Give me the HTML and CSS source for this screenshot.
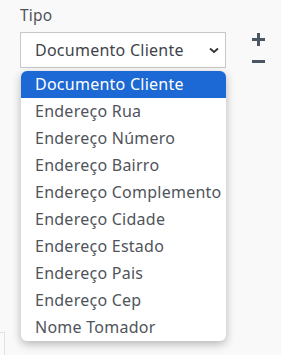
FILE: index.html
```html
<!DOCTYPE html>
<html lang="pt">
<head>
    <meta charset="UTF-8">
    <title>Tipo</title>
    <link rel="stylesheet" href="styles.css">
</head>
<body>
    <div class="field">
        <div class="field-main">
            <label class="label">Tipo</label>
            <div class="select">
                <span>Documento Cliente</span>
                <svg class="chevron" width="10" height="7" viewBox="0 0 10 7"><path d="M1 1.5 L5 5 L9 1.5" fill="none" stroke="#333" stroke-width="1.8"/></svg>
            </div>
            <ul class="options">
                <li class="active">Documento Cliente</li>
                <li>Endereço Rua</li>
                <li>Endereço Número</li>
                <li>Endereço Bairro</li>
                <li>Endereço Complemento</li>
                <li>Endereço Cidade</li>
                <li>Endereço Estado</li>
                <li>Endereço Pais</li>
                <li>Endereço Cep</li>
                <li>Nome Tomador</li>
            </ul>
        </div>
        <div class="actions">
            <span class="plus"></span>
            <span class="minus"></span>
        </div>
    </div>
    <div class="behind"></div>
</body>
</html>
```

FILE: styles.css
```css
html {
    overflow: hidden;
}

body {
    margin: 0;
    width: 281px;
    height: 355px;
    overflow: hidden;
    background-color: #f9f9f9;
    font-family: "Noto Sans", sans-serif;
    color: #4f545a;
    position: relative;
}

.field {
    display: flex;
    padding: 5px 0 0 20px;
}

.field-main {
    width: 206px;
}

.label {
    display: block;
    font-size: 15.5px;
    line-height: 20px;
    height: 27px;
    letter-spacing: 0.2px;
}

.select {
    height: 34px;
    border: 1px solid #c8c8c8;
    background: #fff;
    display: flex;
    align-items: center;
    justify-content: space-between;
    padding: 0 6px 0 14px;
    font-size: 16px;
    letter-spacing: 0.25px;
    color: #3f444a;
}

.options {
    list-style: none;
    margin: 3px 0 0 1px;
    padding: 0;
    width: 205px;
    background: #fff;
    border-radius: 6px;
    box-shadow: 0 3px 10px rgba(0, 0, 0, 0.28);
    overflow: hidden;
    position: relative;
    z-index: 2;
    font-size: 16px;
    letter-spacing: 0.25px;
}

.options li {
    height: 27px;
    line-height: 27px;
    padding-left: 14px;
    white-space: nowrap;
}

.options li.active {
    background: #1c68d4;
    color: #fff;
}

.actions {
    width: 26px;
    margin-left: 19px;
    padding-top: 28px;
    display: flex;
    flex-direction: column;
    align-items: center;
}

.plus {
    width: 13px;
    height: 13px;
    position: relative;
}

.plus::before,
.plus::after,
.minus {
    background: #4a5661;
}

.plus::before {
    content: "";
    position: absolute;
    left: 0;
    top: 5px;
    width: 13px;
    height: 3px;
}

.plus::after {
    content: "";
    position: absolute;
    left: 5px;
    top: 0;
    width: 3px;
    height: 13px;
}

.minus {
    display: block;
    width: 13px;
    height: 3px;
    margin-top: 14px;
}

.behind {
    position: absolute;
    left: 0;
    top: 332px;
    width: 5px;
    height: 23px;
    border-top: 1px solid #e2e2e2;
    border-right: 1px solid #e2e2e2;
    background: #fafafa;
    box-sizing: border-box;
}
```
